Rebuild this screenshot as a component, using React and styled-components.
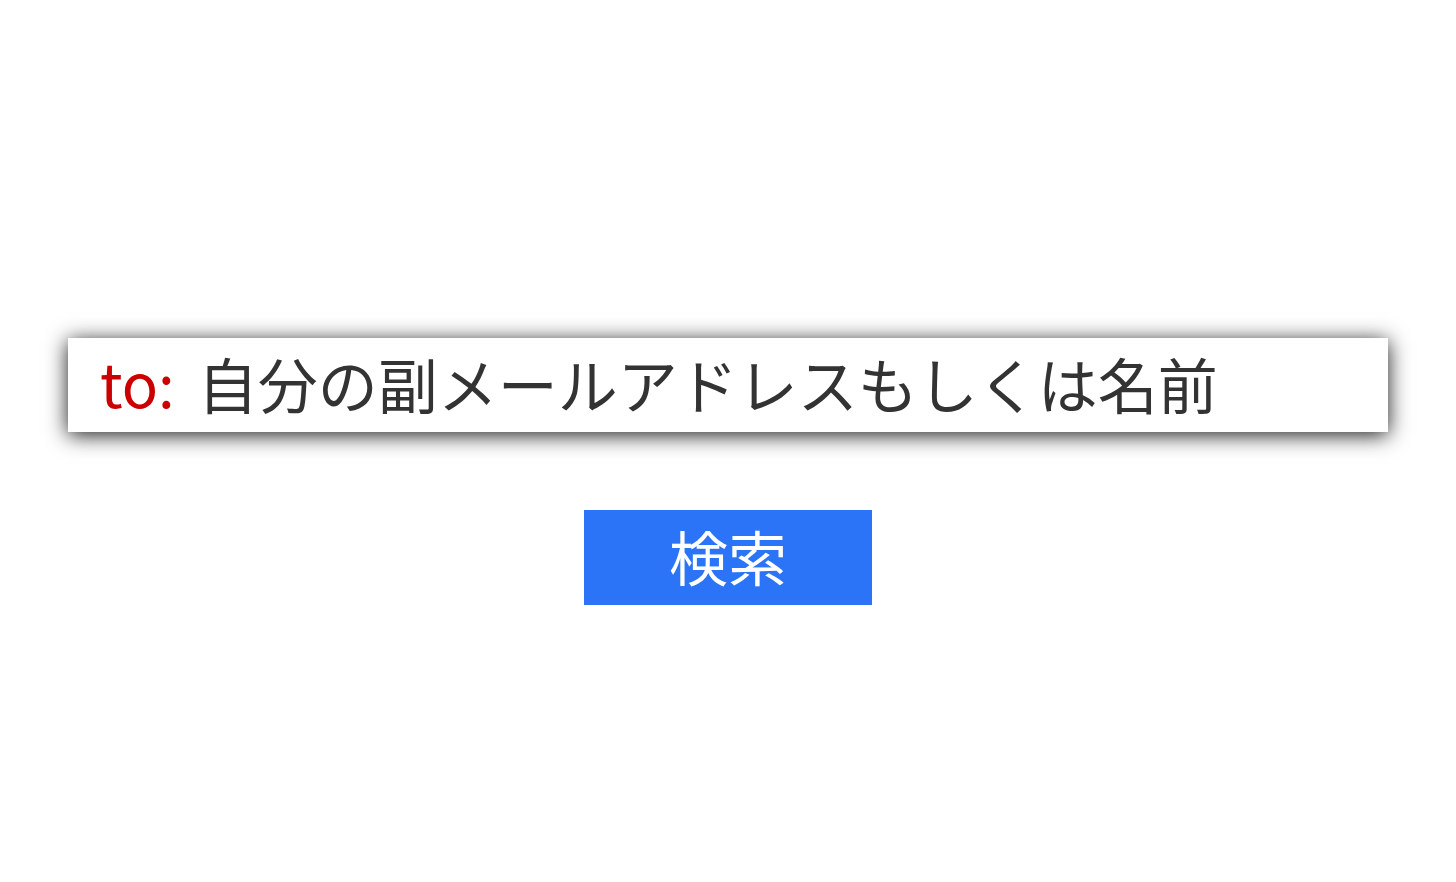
import React from "react";
import styled, { createGlobalStyle } from "styled-components";

const GlobalStyle = createGlobalStyle`
  html, body {
    margin: 0;
    padding: 0;
    background: #ffffff;
    font-family: "Noto Sans CJK JP", "Noto Sans", sans-serif;
  }
`;

const Page = styled.main`
  display: flex;
  flex-direction: column;
  align-items: center;
  gap: 78px;
  padding: 338px 68px 0;
`;

const SearchBox = styled.label`
  display: flex;
  align-items: center;
  box-sizing: border-box;
  width: 100%;
  height: 94px;
  padding: 0 32px 6px;
  background: #ffffff;
  box-shadow: 0 3px 20px rgba(0, 0, 0, 0.9);
`;

const Prefix = styled.span`
  color: #cc0000;
  font-size: 60px;
  line-height: 1;
  margin-right: 23px;
`;

const Field = styled.input`
  flex: 1;
  border: none;
  outline: none;
  padding: 0;
  background: transparent;
  font-family: inherit;
  font-size: 60px;
  color: #333333;

  &::placeholder {
    color: #333333;
    opacity: 1;
  }
`;

const SearchButton = styled.button`
  width: 288px;
  height: 95px;
  border: none;
  background: #2b74f7;
  color: #ffffff;
  font-family: inherit;
  font-size: 59px;
  padding: 0 0 4px;
  cursor: pointer;
`;

export default function App() {
  return (
    <>
      <GlobalStyle />
      <Page>
        <SearchBox>
          <Prefix>to:</Prefix>
          <Field type="text" placeholder="自分の副メールアドレスもしくは名前" />
        </SearchBox>
        <SearchButton type="button">検索</SearchButton>
      </Page>
    </>
  );
}
